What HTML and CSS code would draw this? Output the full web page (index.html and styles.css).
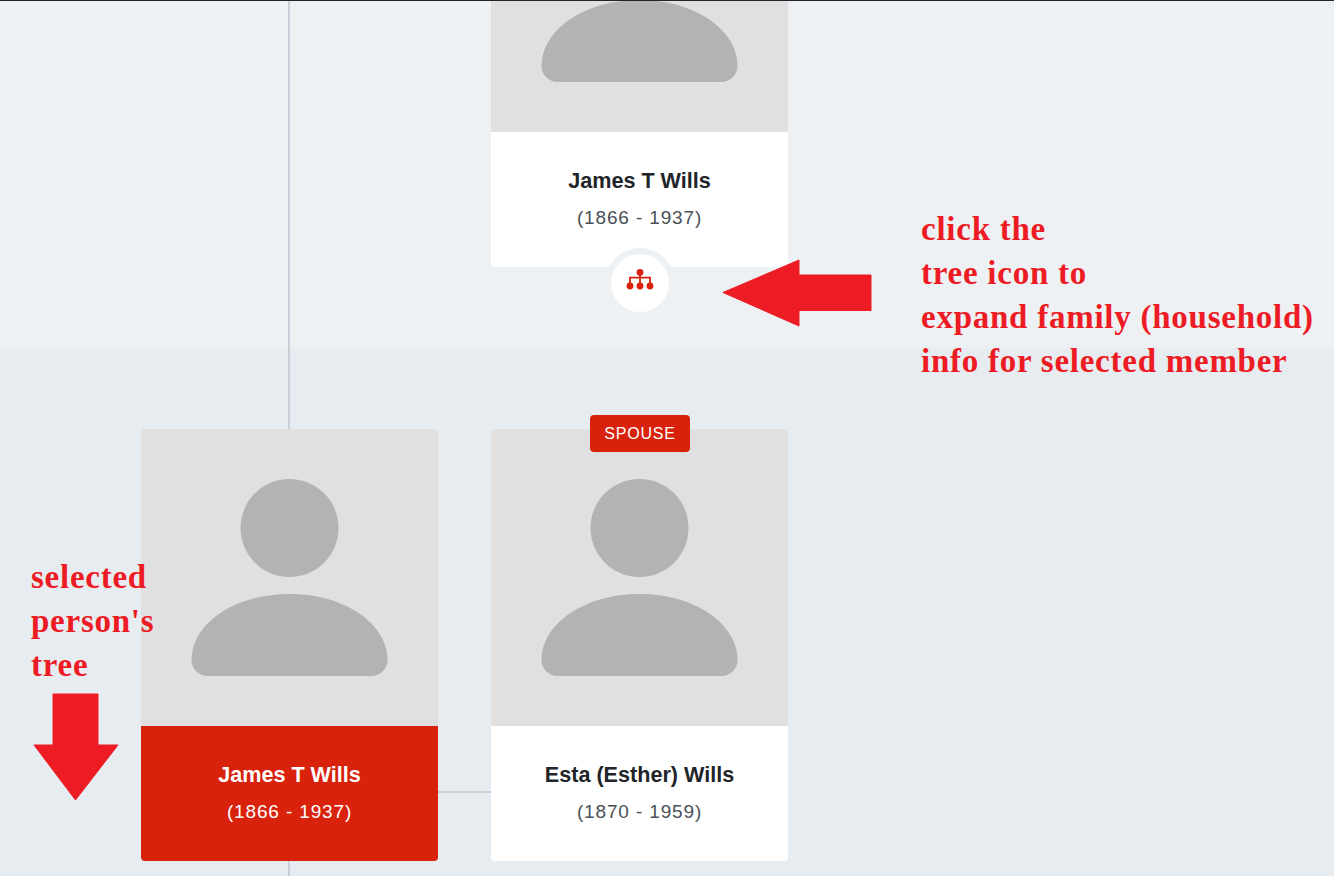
FILE: index.html
```html
<!DOCTYPE html>
<html lang="en">
<head>
<meta charset="utf-8">
<title>Family tree</title>
<link rel="stylesheet" href="styles.css">
</head>
<body>
<main class="page">
  <div class="trunk"></div>

  <section class="band band-top">
    <article class="card">
      <div class="photo">
        <svg class="avatar" viewBox="0 0 297 297"><circle cx="148.5" cy="99" r="49"/><path d="M66.500 247a16 16 0 0 1-16-16C50.500 195 93 165 148.500 165S246.500 195 246.500 231a16 16 0 0 1-16 16Z"/></svg>
      </div>
      <div class="info">
        <h2 class="name">James T Wills</h2>
        <p class="years">(1866 - 1937)</p>
      </div>
      <button class="expand" type="button" aria-label="Expand family">
        <svg class="tree-icon" viewBox="0 0 26 20"><circle cx="13" cy="3.300" r="3.400"/><circle cx="3" cy="17" r="3.400"/><circle cx="13" cy="17" r="3.400"/><circle cx="23" cy="17" r="3.400"/><path class="tree-lines" d="M13 5v9M3 14V8.700h20V14"/></svg>
      </button>
    </article>
  </section>

  <section class="band band-bottom">
    <article class="card">
      <div class="photo">
        <svg class="avatar" viewBox="0 0 297 297"><circle cx="148.5" cy="99" r="49"/><path d="M66.500 247a16 16 0 0 1-16-16C50.500 195 93 165 148.500 165S246.500 195 246.500 231a16 16 0 0 1-16 16Z"/></svg>
      </div>
      <div class="info info-selected">
        <h2 class="name">James T Wills</h2>
        <p class="years">(1866 - 1937)</p>
      </div>
    </article>
    <div class="link"></div>
    <article class="card">
      <span class="badge">SPOUSE</span>
      <div class="photo">
        <svg class="avatar" viewBox="0 0 297 297"><circle cx="148.5" cy="99" r="49"/><path d="M66.500 247a16 16 0 0 1-16-16C50.500 195 93 165 148.500 165S246.500 195 246.500 231a16 16 0 0 1-16 16Z"/></svg>
      </div>
      <div class="info">
        <h2 class="name">Esta (Esther) Wills</h2>
        <p class="years">(1870 - 1959)</p>
      </div>
    </article>
  </section>

  <p class="note note-right">click the<br>tree icon to<br>expand family (household)<br>info for selected member</p>
  <p class="note note-left">selected<br>person's<br>tree</p>
  <svg class="arrow arrow-left" viewBox="0 0 150 68"><path d="M1 33.500 77 1v15h72v35.500H77V67Z"/></svg>
  <svg class="arrow arrow-down" viewBox="0 0 86 108"><path d="M20 1h45v51h20L42.500 107 1 52h19Z"/></svg>
</main>
</body>
</html>
```

FILE: styles.css
```css
* { box-sizing: border-box; }

html, body {
  margin: 0;
  padding: 0;
}

body {
  font-family: "Liberation Sans", Arial, sans-serif;
  background: #e7ecf1;
}

.page {
  position: relative;
  width: 1334px;
  height: 876px;
  overflow: hidden;
  border-top: 1px solid #212529;
}

.band {
  position: relative;
  display: flex;
}

.band-top {
  height: 347px;
  padding-left: 491px;
  align-items: flex-end;
  padding-bottom: 81px;
  background: #edf1f4;
}

.band-bottom {
  height: 528px;
  padding: 81px 0 0 141px;
  align-items: flex-start;
  background: #e7ecf1;
}

.trunk {
  position: absolute;
  left: 288px;
  top: 0;
  bottom: 0;
  width: 2px;
  background: #c9ced8;
  z-index: 1;
}

.card {
  position: relative;
  flex: 0 0 297px;
  width: 297px;
  z-index: 2;
}

.photo {
  height: 297px;
  background: #e0e0e0;
  border-radius: 4px 4px 0 0;
}

.avatar {
  display: block;
  width: 297px;
  height: 297px;
  fill: #b3b3b3;
}

.info {
  height: 135px;
  padding-top: 36px;
  text-align: center;
  background: #fff;
  color: #212529;
  border-radius: 0 0 4px 4px;
}

.info-selected {
  background: #d8220c;
  color: #fff;
}

.name {
  margin: 0;
  font-size: 21.6px;
  line-height: 26px;
  font-weight: 700;
}

.years {
  margin: 11px 0 0;
  font-size: 19px;
  line-height: 26px;
  letter-spacing: 0.85px;
  color: #495057;
}

.info-selected .years {
  color: #fff;
}

.link {
  position: relative;
  flex: 0 0 53px;
  height: 2px;
  margin-top: 362px;
  background: #c9ced8;
  z-index: 2;
}

.badge {
  position: absolute;
  left: 99px;
  top: -14px;
  width: 100px;
  height: 37px;
  background: #d8220c;
  color: #fff;
  border-radius: 4px;
  font-size: 16px;
  line-height: 37px;
  letter-spacing: 0.8px;
  text-align: center;
}

.expand {
  position: absolute;
  left: 114px;
  bottom: -51px;
  width: 70px;
  height: 70px;
  padding: 0 0 8px;
  border: 6px solid #edf1f4;
  border-radius: 50%;
  background: #fff;
  display: flex;
  align-items: center;
  justify-content: center;
}

.tree-icon {
  display: block;
  width: 26px;
  height: 20px;
  overflow: visible;
  fill: #d8220c;
}

.tree-lines {
  fill: none;
  stroke: #d8220c;
  stroke-width: 1.800;
}

.note {
  position: absolute;
  margin: 0;
  font-family: "Liberation Serif", "Times New Roman", serif;
  font-weight: 700;
  font-size: 33px;
  line-height: 44px;
  letter-spacing: 0.75px;
  color: #ed1c24;
  z-index: 3;
}

.note-right {
  left: 921px;
  top: 206px;
}

.note-left {
  left: 31px;
  top: 554px;
}

.arrow {
  position: absolute;
  fill: #ed1c24;
  stroke: #ed1c24;
  stroke-width: 1px;
  stroke-linejoin: round;
  z-index: 3;
}

.arrow-left {
  left: 722px;
  top: 258px;
  width: 150px;
  height: 68px;
}

.arrow-down {
  left: 32.500px;
  top: 692px;
  width: 86px;
  height: 108px;
}
```
